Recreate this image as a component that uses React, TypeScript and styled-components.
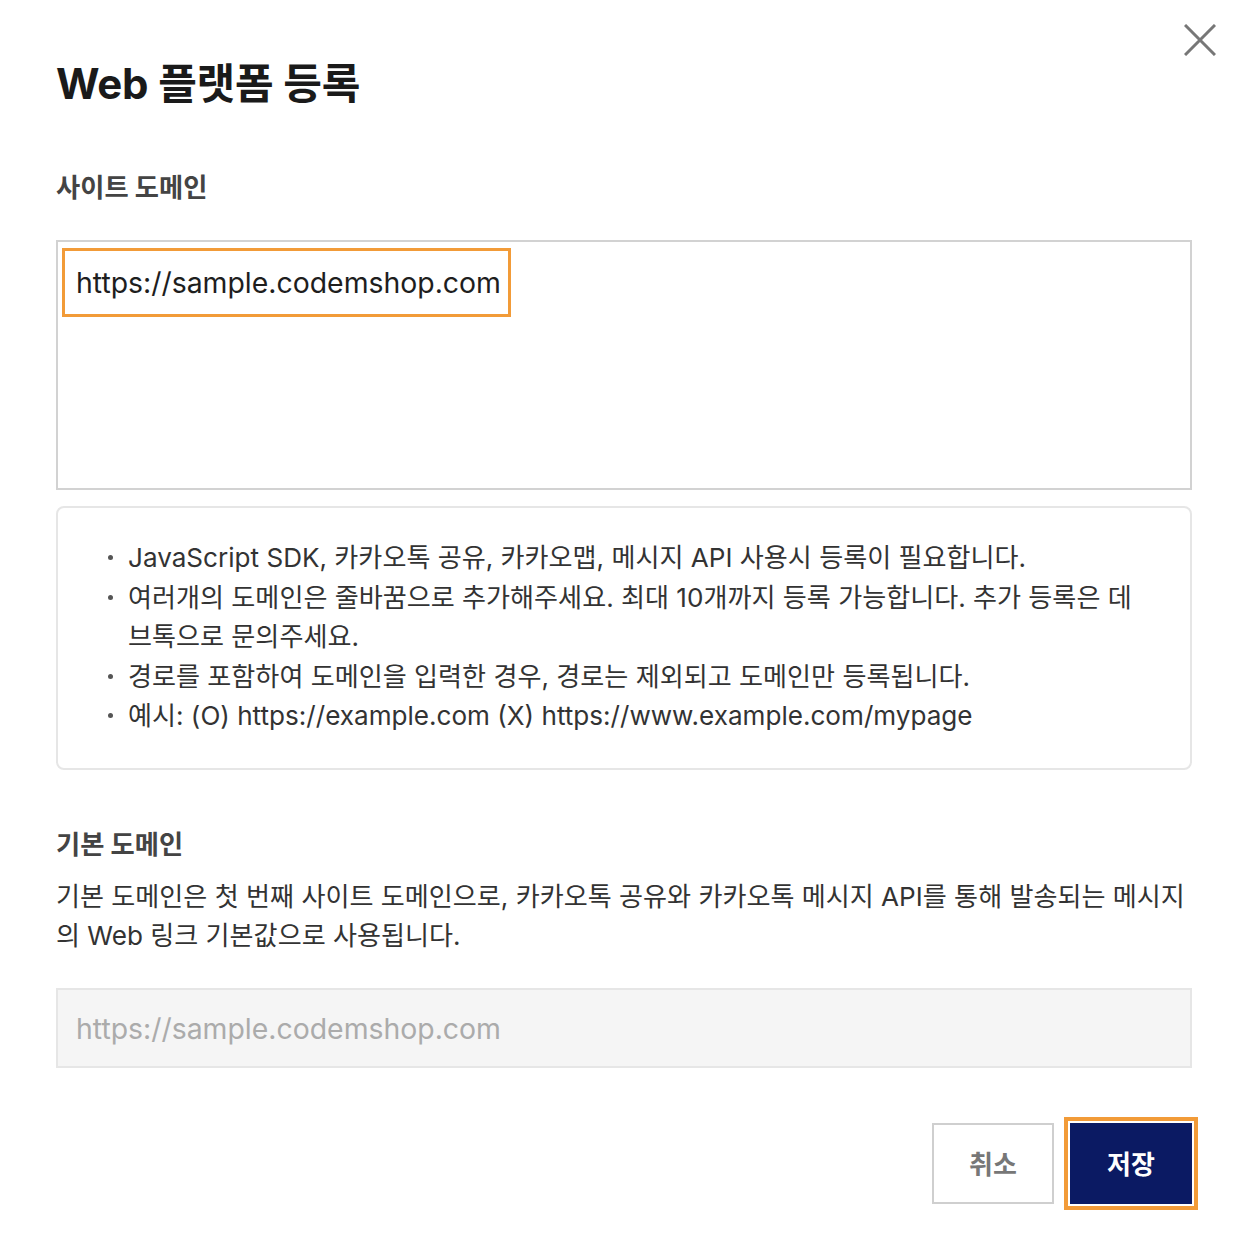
import React from "react";
import styled, { createGlobalStyle } from "styled-components";

const Global = createGlobalStyle`
  html, body { margin: 0; padding: 0; background: #fff; }
  body { font-family: "Inter", "Noto Sans CJK KR", sans-serif; color: #222; }
  * { box-sizing: border-box; }
`;

const Modal = styled.div`
  position: relative;
  width: 1252px;
  padding: 56px 60px 36px 56px;
  display: flex;
  flex-direction: column;
`;

const CloseButton = styled.button`
  position: absolute;
  top: 24px;
  right: 36px;
  width: 32px;
  height: 32px;
  padding: 0;
  border: 0;
  background: transparent;
  cursor: pointer;
  display: flex;
`;

const Title = styled.h1`
  margin: 0;
  font-size: 42px;
  line-height: 56px;
  font-weight: 700;
  color: #1a1a1a;
  letter-spacing: -0.2px;
`;

const Label = styled.h2<{ $top: number }>`
  margin: ${(p) => p.$top}px 0 0;
  font-size: 26.3px;
  line-height: 36px;
  font-weight: 700;
  color: #444;
`;

const DomainArea = styled.div`
  margin-top: 34px;
  height: 250px;
  border: 2px solid #d2d2d2;
  padding: 6px 4px;
`;

const Highlight = styled.span`
  display: inline-block;
  border: 3px solid #f29b38;
  padding: 0 7px 0 11px;
  font-size: 28.4px;
  line-height: 63px;
  color: #1e1e1e;
`;

const InfoBox = styled.div`
  margin-top: 16px;
  height: 264px;
  border: 2px solid #e6e6e6;
  border-radius: 8px;
  padding: 30px 40px 0 50px;
`;

const InfoList = styled.ul`
  margin: 0;
  padding: 0;
  list-style: none;
`;

const InfoItem = styled.li`
  position: relative;
  padding-left: 20px;
  font-size: 26.1px;
  line-height: 39.5px;
  color: #333;
  &::before {
    content: "";
    position: absolute;
    left: 0;
    top: 17px;
    width: 5px;
    height: 5px;
    border-radius: 50%;
    background: #555;
  }
`;

const Description = styled.p`
  margin: 14px 0 0;
  font-size: 26.1px;
  line-height: 39px;
  color: #333;
`;

const ReadonlyInput = styled.div`
  margin-top: 33px;
  height: 80px;
  border: 2px solid #e6e6e6;
  background: #f5f5f5;
  padding: 0 18px;
  display: flex;
  align-items: center;
  font-size: 28.4px;
  color: #ababab;
`;

const ButtonRow = styled.div`
  margin-top: 55px;
  display: flex;
  justify-content: flex-end;
  gap: 16px;
`;

const Button = styled.button<{ $primary?: boolean }>`
  width: 122px;
  height: 81px;
  padding: 0 0 3px;
  font-family: inherit;
  font-size: 26px;
  font-weight: 700;
  cursor: pointer;
  border: ${(p) => (p.$primary ? "0" : "2px solid #cfcfcf")};
  background: ${(p) => (p.$primary ? "#0b1a63" : "#fff")};
  color: ${(p) => (p.$primary ? "#fff" : "#777")};
  outline: ${(p) => (p.$primary ? "4px solid #f29b38" : "none")};
  outline-offset: 2px;
`;

export default function App() {
  return (
    <>
      <Global />
      <Modal>
        <CloseButton aria-label="닫기">
          <svg width="32" height="32" viewBox="0 0 32 32">
            <path d="M1 1 L31 31 M31 1 L1 31" stroke="#777" strokeWidth="3" fill="none" />
          </svg>
        </CloseButton>
        <Title>Web 플랫폼 등록</Title>
        <Label $top={58}>사이트 도메인</Label>
        <DomainArea>
          <Highlight>https://sample.codemshop.com</Highlight>
        </DomainArea>
        <InfoBox>
          <InfoList>
            <InfoItem>JavaScript SDK, 카카오톡 공유, 카카오맵, 메시지 API 사용시 등록이 필요합니다.</InfoItem>
            <InfoItem>
              여러개의 도메인은 줄바꿈으로 추가해주세요. 최대 10개까지 등록 가능합니다. 추가 등록은 데브톡으로 문의주세요.
            </InfoItem>
            <InfoItem>경로를 포함하여 도메인을 입력한 경우, 경로는 제외되고 도메인만 등록됩니다.</InfoItem>
            <InfoItem>예시: (O) https://example.com (X) https://www.example.com/mypage</InfoItem>
          </InfoList>
        </InfoBox>
        <Label $top={57}>기본 도메인</Label>
        <Description>
          기본 도메인은 첫 번째 사이트 도메인으로, 카카오톡 공유와 카카오톡 메시지 API를 통해 발송되는 메시지의 Web 링크 기본값으로 사용됩니다.
        </Description>
        <ReadonlyInput>https://sample.codemshop.com</ReadonlyInput>
        <ButtonRow>
          <Button>취소</Button>
          <Button $primary>저장</Button>
        </ButtonRow>
      </Modal>
    </>
  );
}
